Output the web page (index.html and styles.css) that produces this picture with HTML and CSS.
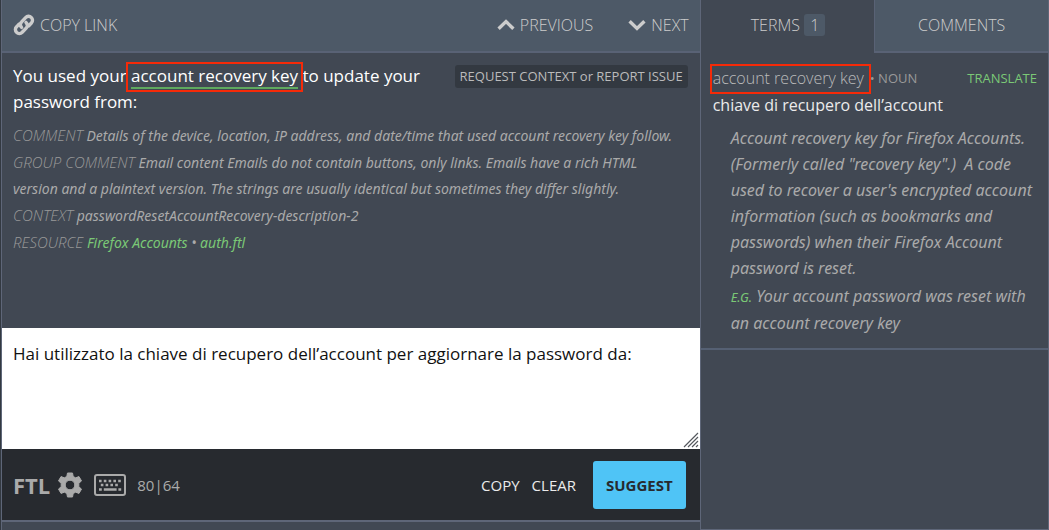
FILE: index.html
```html
<!DOCTYPE html>
<html lang="en">
<head>
<meta charset="utf-8">
<title>Translation editor</title>
<link rel="stylesheet" href="styles.css">
</head>
<body>
<div class="workspace">
  <main class="editor">
    <nav class="toolbar">
      <button class="tool" type="button">
        <svg class="icon-link" viewBox="0 0 22 22" aria-hidden="true"><g fill="none" stroke="currentColor" stroke-width="3.400" stroke-linecap="round"><path d="M8.6 13.4C6.8 11.6 7 9.6 8.4 8.2L12.6 3.6C14.2 2 16.6 1.8 18.2 3.4S20 7.400 18.400 9L15.800 11.700"/><path d="M13 8.400C14.900 10.200 14.900 12.200 13.400 13.800L9.200 18.200C7.600 19.800 5.200 20 3.600 18.400S2 14.400 3.600 12.800L5.800 10.400"/></g></svg>
        <span>COPY LINK</span>
      </button>
      <div class="tool-group">
        <button class="tool" type="button">
          <svg class="icon-chevron" viewBox="0 0 18 12" aria-hidden="true"><path d="M1.600 9.800 9 2.600l7.400 7.200" fill="none" stroke="currentColor" stroke-width="3.400"/></svg>
          <span>PREVIOUS</span>
        </button>
        <button class="tool" type="button">
          <svg class="icon-chevron" viewBox="0 0 18 12" aria-hidden="true"><path d="M1.600 2.200 9 9.400l7.400-7.200" fill="none" stroke="currentColor" stroke-width="3.400"/></svg>
          <span>NEXT</span>
        </button>
      </div>
    </nav>

    <section class="source">
      <div class="source-head">
        <p class="original">You used your <mark class="term callout">account recovery key</mark> to update your password from:</p>
        <button class="request" type="button">REQUEST CONTEXT or REPORT ISSUE</button>
      </div>
      <div class="meta">
        <p><span class="label">COMMENT</span> Details of the device, location, IP address, and date/time that used account recovery key follow.</p>
        <p><span class="label">GROUP COMMENT</span> Email content Emails do not contain buttons, only links. Emails have a rich HTML version and a plaintext version. The strings are usually identical but sometimes they differ slightly.</p>
        <p><span class="label">CONTEXT</span> passwordResetAccountRecovery-description-2</p>
        <p><span class="label">RESOURCE</span> <a href="#project">Firefox Accounts</a> • <a href="#resource">auth.ftl</a></p>
      </div>
    </section>

    <div class="translation">
      <textarea class="translation-input" aria-label="Translation" spellcheck="false">Hai utilizzato la chiave di recupero dell’account per aggiornare la password da:</textarea>
      <svg class="grip" viewBox="0 0 16 16" aria-hidden="true"><path d="M1 15 15 1M5 15 15 5M9 15l6-6M13 15l2-2" stroke="#55585e" stroke-width="1.200"/></svg>
    </div>

    <footer class="actions">
      <button class="ftl" type="button">FTL</button>
      <button class="icon-button" type="button" aria-label="Settings">
        <svg class="icon-gear" viewBox="0 0 26 26" aria-hidden="true"><path fill="currentColor" fill-rule="evenodd" stroke="currentColor" stroke-width="1" stroke-linejoin="round" d="M10.500 1h5l.7 3.500 2.400 1.300 3.400-1.200 2.500 4.300-2.700 2.400v3.400l2.700 2.400-2.500 4.300-3.400-1.200-2.400 1.300-.7 3.500h-5l-.7-3.500-2.400-1.300L4 21.400l-2.500-4.300 2.700-2.400v-3.400L1.500 8.900 4 4.600l3.400 1.200 2.400-1.300zM13 8.200a4.800 4.800 0 1 0 0 9.600 4.800 4.800 0 0 0 0-9.600z"/></svg>
      </button>
      <button class="icon-button keyboard" type="button" aria-label="Keyboard">
        <svg class="icon-keyboard" viewBox="0 0 32 22" aria-hidden="true"><rect x="1" y="1" width="30" height="20" rx="2" fill="none" stroke="currentColor" stroke-width="2"/><path d="M5 7h22" stroke="currentColor" stroke-width="2.600" stroke-dasharray="2.600 2.200"/><path d="M6.800 11h19" stroke="currentColor" stroke-width="2.600" stroke-dasharray="2.600 2.200"/><path d="M5 15.500h2.800M9.800 15.500h12.800M24.400 15.500h2.800" stroke="currentColor" stroke-width="2.400"/></svg>
      </button>
      <span class="count">80|64</span>
      <div class="action-group">
        <button class="text-button" type="button">COPY</button>
        <button class="text-button" type="button">CLEAR</button>
        <button class="suggest" type="button">SUGGEST</button>
      </div>
    </footer>
    <div class="below"></div>
  </main>

  <aside class="helpers">
    <div class="tabs" role="tablist">
      <button class="tab active" type="button" role="tab" aria-selected="true">TERMS <span class="badge">1</span></button>
      <button class="tab" type="button" role="tab" aria-selected="false">COMMENTS</button>
    </div>
    <article class="term-card">
      <header class="term-head">
        <span class="term-name callout">account recovery key</span>
        <span class="part">• NOUN</span>
        <a class="translate" href="#translate">TRANSLATE</a>
      </header>
      <p class="term-translation">chiave di recupero dell’account</p>
      <div class="term-details">
        <p>Account recovery key for Firefox Accounts. (Formerly called "recovery key".)&nbsp; A code used to recover a user's encrypted account information (such as bookmarks and passwords) when their Firefox Account password is reset.</p>
        <p><span class="eg">E.G.</span> Your account password was reset with an account recovery key</p>
      </div>
    </article>
  </aside>
</div>
</body>
</html>
```

FILE: styles.css
```css
* { box-sizing: border-box; }

body {
  margin: 0;
  background: #414853;
  color: #aaa;
  font-family: "Open Sans", "Noto Sans", sans-serif;
  font-size: 15px;
}

p { margin: 0; }

button {
  margin: 0;
  padding: 0;
  border: 0;
  background: none;
  color: inherit;
  font: inherit;
  cursor: pointer;
}

a { color: #7bc876; text-decoration: none; }

svg { display: block; }

.workspace {
  display: grid;
  grid-template-columns: 2fr 1fr;
  min-height: 100vh;
  border-left: 1px solid #333941;
}

.editor {
  display: flex;
  flex-direction: column;
  min-width: 0;
  border-left: 1px solid #5e6678;
}

.toolbar {
  display: flex;
  justify-content: space-between;
  height: 53px;
  padding: 0 11px 2px;
  border-bottom: 2px solid #596275;
  background: #4d5967;
}

.tool,
.tool-group {
  display: flex;
  align-items: center;
}

.tool { gap: 5px; color: #ccc; font-size: 16px; font-weight: 300; }
.tool-group { gap: 35px; }
.icon-link { width: 22px; height: 22px; }
.icon-chevron { width: 18px; height: 12px; }

.source {
  flex: 1;
  padding: 10px 12px 16px 11px;
}

.source-head {
  display: flex;
  justify-content: space-between;
  align-items: flex-start;
  gap: 24px;
}

.original {
  color: #fff;
  font-size: 17px;
  line-height: 26px;
}

.term {
  background: none;
  color: inherit;
  border-bottom: 2px solid #5fa95f;
}

.callout { position: relative; }

.callout::after {
  content: "";
  position: absolute;
  inset: -2px -5px -5px;
  border: 2px solid #f52a08;
}

.request {
  flex: none;
  margin-top: 2px;
  padding: 0 5px;
  border-radius: 3px;
  background: #333941;
  color: #bbb;
  font-size: 13px;
  line-height: 23px;
}

.meta {
  margin-top: 7px;
  padding-right: 12px;
  font-family: "Noto Sans", "Open Sans", sans-serif;
  font-size: 14px;
  font-style: italic;
  line-height: 26px;
}

.label {
  color: #999;
  font-family: "Open Sans", "Noto Sans", sans-serif;
  font-size: 15px;
  font-weight: 300;
}

.translation {
  position: relative;
  height: 121px;
  background: #fff;
}

.translation-input {
  display: block;
  width: 100%;
  height: 100%;
  padding: 13px 11px;
  border: 0;
  outline: 0;
  background: #fff;
  color: #111;
  font: inherit;
  font-size: 17px;
  line-height: 26px;
  resize: none;
}

.grip {
  position: absolute;
  right: 1px;
  bottom: 1px;
  width: 16px;
  height: 16px;
}

.actions {
  display: flex;
  align-items: center;
  height: 71px;
  padding: 0 14px 0 11px;
  background: #272a2f;
}

.ftl { font-size: 22px; font-weight: 700; }
.icon-button { margin-left: 7px; }
.keyboard { margin-left: 11px; }
.icon-gear { width: 26px; height: 26px; }
.icon-keyboard { width: 32px; height: 22px; }
.count { margin-left: 11px; font-size: 15px; }

.action-group {
  display: flex;
  align-items: center;
  gap: 12px;
  margin-left: auto;
  color: #ebebeb;
}

.suggest {
  margin-left: 5px;
  padding: 0 13px;
  border-radius: 3px;
  background: #4fc4f6;
  color: #272a2f;
  font-weight: 700;
  line-height: 48px;
}

.below {
  height: 10px;
  border-top: 2px solid #5e6678;
}

.helpers {
  min-width: 0;
  border: solid #5e6678;
  border-width: 0 1px 1px;
}

.tabs {
  display: grid;
  grid-template-columns: 1fr 1fr;
  height: 53px;
}

.tab {
  padding-bottom: 2px;
  border: solid #596275;
  border-width: 0 0 2px 1px;
  background: #4d5967;
  color: #ccc;
  font-size: 16px;
  font-weight: 300;
}

.tab.active {
  border-color: transparent;
  background: none;
}

.badge {
  display: inline-block;
  padding: 0 6px;
  border-radius: 3px;
  background: #4d5967;
  line-height: 22px;
}

.term-card {
  padding: 12px 11px 12px 12px;
  border-bottom: 2px solid #556073;
  line-height: 26px;
}

.term-head { display: flex; align-items: center; }
.term-name { color: #bbb; font-size: 16px; font-weight: 300; }
.term-head .callout::after { inset: -1px -7px -3px -3px; }
.part { margin-left: 6px; color: #999; font-size: 13px; }
.translate { margin-left: auto; font-size: 13px; }

.term-translation {
  color: #ebebeb;
  font-size: 16px;
  line-height: 28px;
}

.term-details {
  display: grid;
  gap: 2px;
  margin-top: 6px;
  padding-left: 18px;
  font-family: "Noto Sans", "Open Sans", sans-serif;
  font-size: 16px;
  font-style: italic;
}

.eg { color: #7bc876; font-size: 13px; }
```
